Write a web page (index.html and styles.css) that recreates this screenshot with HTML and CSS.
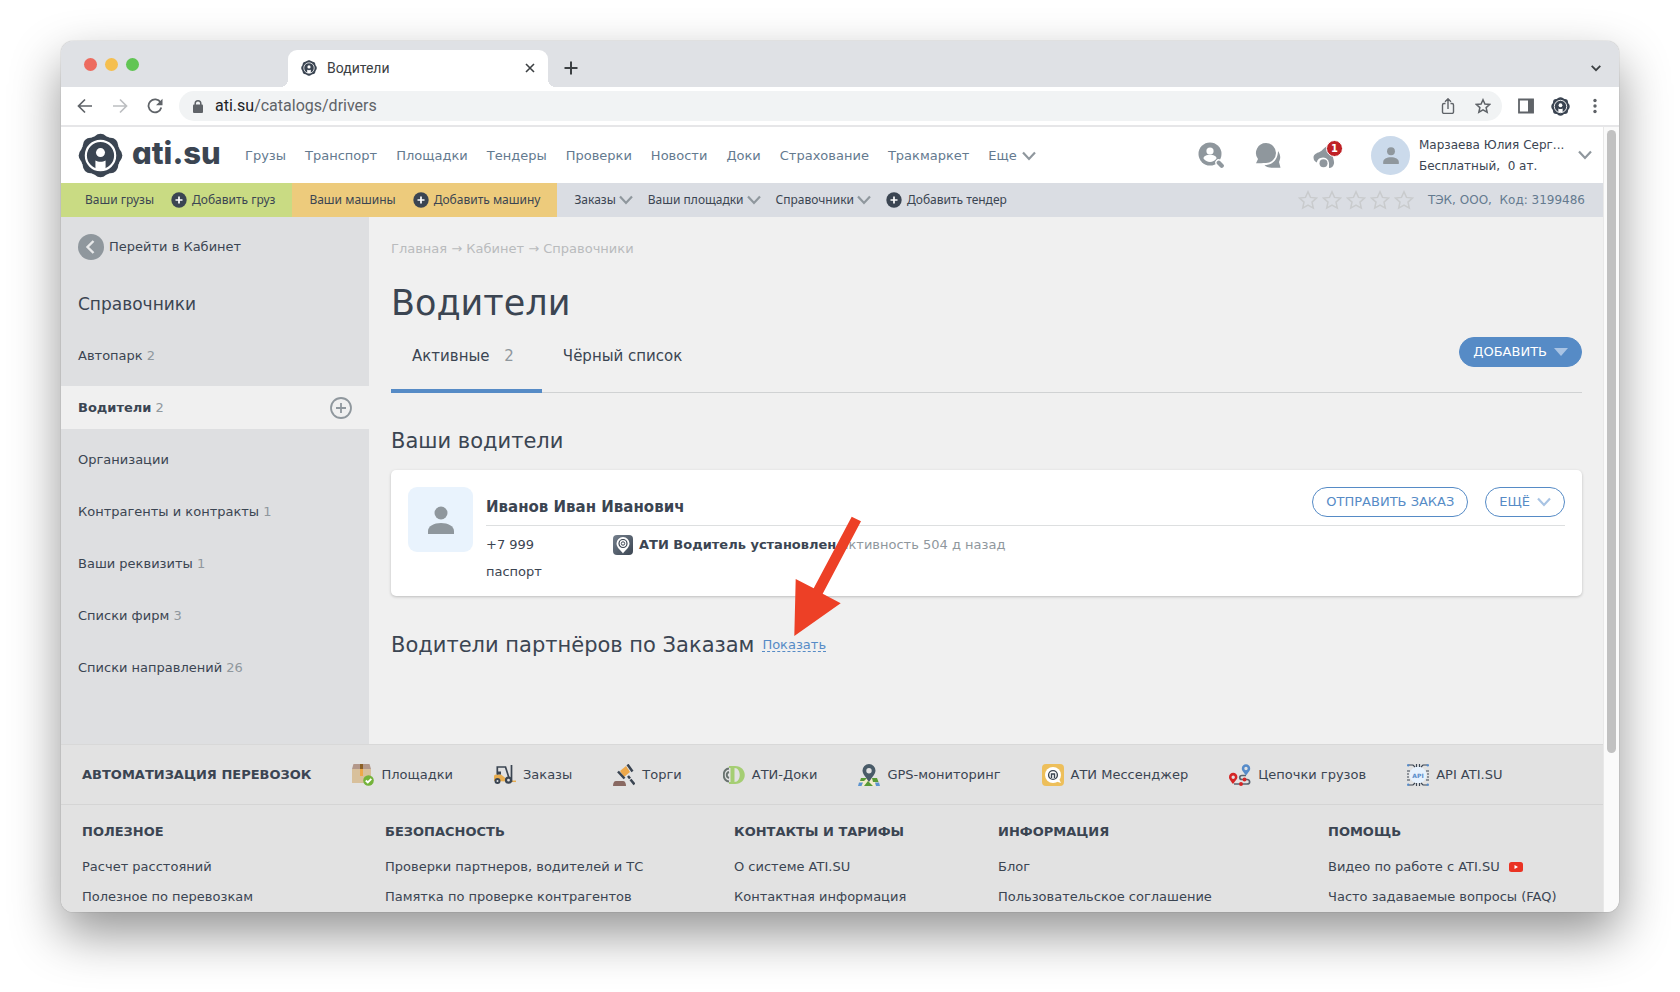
FILE: index.html
```html
<!DOCTYPE html>
<html lang="ru">
<head>
<meta charset="utf-8">
<title>Водители</title>
<link rel="stylesheet" href="styles.css">
</head>
<body>
<svg class="defs" aria-hidden="true">
  <symbol id="gear" viewBox="0 0 46 46">
    <g fill="#3b4552"><circle cx="23" cy="23" r="20.500"/><circle cx="23" cy="8.500" r="7.800"/><circle cx="33.300" cy="12.700" r="7.800"/><circle cx="37.500" cy="23" r="7.800"/><circle cx="33.300" cy="33.300" r="7.800"/><circle cx="23" cy="37.500" r="7.800"/><circle cx="12.700" cy="33.300" r="7.800"/><circle cx="8.500" cy="23" r="7.800"/><circle cx="12.700" cy="12.700" r="7.800"/></g>
    <circle cx="23" cy="23" r="15" fill="none" stroke="#fff" stroke-width="2.200"/>
    <circle cx="23" cy="20" r="4.600" fill="#fff"/>
    <path fill="#fff" d="M17.800 36.500V28c3 1.800 7.400 1.800 10.400 0v8.500c-3 1.500-7.400 1.500-10.400 0z"/>
  </symbol>
  <symbol id="chev" viewBox="0 0 14 10"><path d="M1 1.500l6 6.500 6-6.500" fill="none" stroke="currentColor" stroke-width="2.200"/></symbol>
  <symbol id="plus" viewBox="0 0 16 16"><circle cx="8" cy="8" r="7.700" fill="#3b4552"/><path d="M8 4.500v7M4.500 8h7" stroke="#fff" stroke-width="1.700"/></symbol>
  <symbol id="star" viewBox="0 0 20 20"><path d="M10 1.800l2.500 5.600 6 .6-4.500 4.100 1.300 6L10 15l-5.300 3.100 1.300-6L1.500 8l6-.6z" fill="none" stroke="currentColor" stroke-width="1.500"/></symbol>
  <symbol id="person" viewBox="0 0 26 28"><circle cx="13" cy="7" r="6.500" fill="#8f979d"/><path d="M0 28v-3c0-5 6-8 13-8s13 3 13 8v3z" fill="#8f979d"/></symbol>
</svg>

<div class="window">
  <div class="tabstrip">
    <div class="lights"><i class="light red"></i><i class="light yellow"></i><i class="light green"></i></div>
    <div class="tab">
      <svg class="i16"><use href="#gear"/></svg>
      <span class="tab-title">Водители</span>
      <button class="plain" aria-label="Закрыть вкладку"><svg class="i10" viewBox="0 0 10 10"><path d="M1 1l8 8M9 1L1 9" stroke="#3c4043" stroke-width="1.600"/></svg></button>
    </div>
    <button class="plain newtab" aria-label="Новая вкладка"><svg class="i14" viewBox="0 0 14 14"><path d="M7 .5v13M.5 7h13" stroke="#3c4043" stroke-width="2"/></svg></button>
    <button class="plain tabs-more" aria-label="Вкладки"><svg class="i10" viewBox="0 0 10 10"><path d="M.7 2.800L5 7.200l4.300-4.400" fill="none" stroke="#3c4043" stroke-width="1.800"/></svg></button>
  </div>

  <div class="toolbar">
    <div class="navbtns">
      <button class="plain" aria-label="Назад"><svg class="i16" viewBox="0 0 16 16"><path d="M15 8H2M8 1.500L1.500 8 8 14.500" fill="none" stroke="#5f6368" stroke-width="1.700"/></svg></button>
      <button class="plain" aria-label="Вперёд"><svg class="i16" viewBox="0 0 16 16"><path d="M1 8h13M8 1.500L14.500 8 8 14.500" fill="none" stroke="#bcbec1" stroke-width="1.700"/></svg></button>
      <button class="plain" aria-label="Обновить"><svg class="i16" viewBox="0 0 16 16"><path d="M13.600 4.500A6.500 6.500 0 1 0 14.300 9.500" fill="none" stroke="#5f6368" stroke-width="1.800"/><path d="M15.500.8v6.400H9z" fill="#5f6368"/></svg></button>
    </div>
    <div class="address">
      <svg class="lock" viewBox="0 0 10 13"><rect y="4.500" width="10" height="8.500" rx="1" fill="#5f6368"/><path d="M2.200 5V3.600a2.800 2.800 0 0 1 5.600 0V5" fill="none" stroke="#5f6368" stroke-width="1.500"/></svg>
      <span class="url"><b>ati.su</b>/catalogs/drivers</span>
      <svg class="i16" viewBox="0 0 16 16"><path d="M5.500 5.500H4A1.500 1.500 0 0 0 2.500 7v7A1.500 1.500 0 0 0 4 15.500h8a1.500 1.500 0 0 0 1.500-1.500V7A1.500 1.500 0 0 0 12 5.500h-1.500M8 11V1M5 3.800l3-3 3 3" fill="none" stroke="#5f6368" stroke-width="1.400"/></svg>
      <svg class="i16" viewBox="0 0 20 20"><path d="M10 2.200l2.400 5.300 5.900.6-4.400 3.900 1.300 5.800L10 14.900l-5.200 2.900L6.100 12 1.700 8.100l5.900-.6z" fill="none" stroke="#5f6368" stroke-width="1.900"/></svg>
    </div>
    <div class="tools">
      <svg class="i16" viewBox="0 0 16 16"><path d="M1 1.500h14v13H1z" fill="none" stroke="#5f6368" stroke-width="1.800"/><path d="M10 1h5.500v14H10z" fill="#5f6368"/></svg>
      <svg class="i18"><use href="#gear"/></svg>
      <svg class="i16" viewBox="0 0 16 16"><g fill="#5f6368"><circle cx="8" cy="2.500" r="1.700"/><circle cx="8" cy="8" r="1.700"/><circle cx="8" cy="13.500" r="1.700"/></g></svg>
    </div>
  </div>

  <div class="viewport">
    <div class="page">
      <header class="header">
        <a class="logo" href="#"><svg class="logo-mark"><use href="#gear"/></svg><span>ati.su</span></a>
        <nav class="nav">
          <a href="#">Грузы</a><a href="#">Транспорт</a><a href="#">Площадки</a><a href="#">Тендеры</a><a href="#">Проверки</a><a href="#">Новости</a><a href="#">Доки</a><a href="#">Страхование</a><a href="#">Тракмаркет</a><a href="#" class="more">Еще <svg class="chev"><use href="#chev"/></svg></a>
        </nav>
        <div class="head-icons">
          <svg class="i26" viewBox="0 0 26 26"><circle cx="12" cy="12" r="11.500" fill="#8f979d"/><circle cx="12" cy="9" r="3.600" fill="#fff"/><path d="M5.500 16.500c0-5 13-5 13 0-3 4.500-10 4.500-13 0z" fill="#fff"/><path d="M20.500 20.500l3.200 3.200" stroke="#fff" stroke-width="6.500" stroke-linecap="round"/><path d="M20.800 20.800l2.900 2.900" stroke="#8f979d" stroke-width="4.300" stroke-linecap="round"/></svg>
          <svg class="i26" viewBox="0 0 26 26"><path d="M11 1a10 10 0 0 1 0 20c-3.500.2-6 .2-10 .2l2-4.200A10 10 0 0 1 11 1z" fill="#8f979d"/><path d="M23 9c4 6 1.500 9 1 11l1.500 5.800H17c-4 0-6-1-7.500-2.500C18 23 23 17 23 9z" fill="#8f979d"/></svg>
          <span class="bell"><svg class="i26" viewBox="0 0 26 26"><path d="M1.500 15.500c0-3 3-4.500 6-5.500 3-1.200 4.500-4.500 7.500-6l6 8c-1 3 1.500 6 1 9.500-.5 3-3 5-5 4.200V21a6 6 0 0 0-8.500-5c-2.500 1-3.500 2.500-3.500 4.500-2-.5-3.500-2.500-3.500-5z" fill="#8f979d"/><circle cx="11.500" cy="21.200" r="4" fill="#8f979d"/></svg><span class="count">1</span></span>
        </div>
        <div class="user">
          <span class="avatar"><svg viewBox="0 0 26 28"><use href="#person"/></svg></span>
          <span class="user-text"><span>Марзаева Юлия Серг...</span><span>Бесплатный,&nbsp; 0 ат.</span></span>
          <svg class="chev grey"><use href="#chev"/></svg>
        </div>
      </header>

      <div class="subbar">
        <div class="group green-bg"><a href="#">Ваши грузы</a><a href="#"><svg class="i16"><use href="#plus"/></svg>Добавить груз</a></div>
        <div class="group orange-bg"><a href="#">Ваши машины</a><a href="#"><svg class="i16"><use href="#plus"/></svg>Добавить машину</a></div>
        <div class="group menu"><a href="#">Заказы<svg class="chev"><use href="#chev"/></svg></a><a href="#">Ваши площадки<svg class="chev"><use href="#chev"/></svg></a><a href="#">Справочники<svg class="chev"><use href="#chev"/></svg></a><a href="#" class="add"><svg class="i16"><use href="#plus"/></svg>Добавить тендер</a></div>
        <div class="firm"><span class="stars"><svg><use href="#star"/></svg><svg><use href="#star"/></svg><svg><use href="#star"/></svg><svg><use href="#star"/></svg><svg><use href="#star"/></svg></span><span>ТЭК, ООО,&nbsp; Код: 3199486</span></div>
      </div>

      <div class="body">
        <aside class="sidebar">
          <a class="back" href="#"><svg viewBox="0 0 26 26"><circle cx="13" cy="13" r="13" fill="#8f979d"/><path d="M15.500 7l-6 6 6 6" fill="none" stroke="#e8e9ea" stroke-width="2.400"/></svg>Перейти в Кабинет</a>
          <h2>Справочники</h2>
          <ul>
            <li><a href="#">Автопарк <em>2</em></a></li>
            <li class="active"><a href="#"><strong>Водители</strong> <em>2</em></a><button class="plain" aria-label="Добавить водителя"><svg class="i22" viewBox="0 0 22 22"><circle cx="11" cy="11" r="10" fill="none" stroke="#8f979d" stroke-width="1.800"/><path d="M11 6v10M6 11h10" stroke="#8f979d" stroke-width="1.800"/></svg></button></li>
            <li><a href="#">Организации</a></li>
            <li><a href="#">Контрагенты и контракты <em>1</em></a></li>
            <li><a href="#">Ваши реквизиты <em>1</em></a></li>
            <li><a href="#">Списки фирм <em>3</em></a></li>
            <li><a href="#">Списки направлений <em>26</em></a></li>
          </ul>
        </aside>

        <main class="main">
          <div class="crumbs"><a href="#">Главная</a> → <a href="#">Кабинет</a> → <a href="#">Справочники</a></div>
          <h1>Водители</h1>
          <div class="tabs">
            <a class="ptab current" href="#">Активные <em>2</em></a><a class="ptab" href="#">Чёрный список</a>
            <button class="pill solid">ДОБАВИТЬ<svg class="caret" viewBox="0 0 14 8"><path d="M0 0h14L7 8z" fill="#a9c4e4"/></svg></button>
          </div>
          <h3>Ваши водители</h3>
          <section class="card">
            <div class="photo"><svg viewBox="0 0 26 28"><use href="#person"/></svg></div>
            <div class="info">
              <div class="info-head"><strong>Иванов Иван Иванович</strong><button class="pill">ОТПРАВИТЬ ЗАКАЗ</button><button class="pill">ЕЩЁ<svg class="chev light-blue"><use href="#chev"/></svg></button></div>
              <div class="info-body">
                <div class="contacts"><span>+7 999</span><span>паспорт</span></div>
                <div class="app"><svg class="i20" viewBox="0 0 20 20"><defs><linearGradient id="ag" x1="0" y1="0" x2="1" y2="1"><stop offset="0" stop-color="#75808d"/><stop offset="1" stop-color="#3b4552"/></linearGradient></defs><rect width="20" height="20" rx="4" fill="url(#ag)"/><path d="M10 18.500c-2-3-6.500-6-6.500-10a6.500 6.500 0 0 1 13 0c0 4-4.500 7-6.500 10z" fill="#fff"/><circle cx="10" cy="8.500" r="4" fill="none" stroke="#3b4552" stroke-width="1.200"/><circle cx="10" cy="8.500" r="1.700" fill="none" stroke="#3b4552"/></svg><span><strong>АТИ Водитель установлен</strong> <span class="muted">активность 504 д назад</span></span></div>
              </div>
            </div>
          </section>
          <div class="partners">
            <h3>Водители партнёров по Заказам</h3>
            <span class="show"><a href="#">Показать</a><svg class="arrow" viewBox="0 0 68 120"><path d="M57.700.7l9.300 4.600-38.300 72.400 18 9.600L.3 120l1.400-57 18 9.300z" fill="#ed4026"/></svg></span>
          </div>
        </main>
      </div>

      <footer class="footer">
        <div class="services">
          <strong>АВТОМАТИЗАЦИЯ ПЕРЕВОЗОК</strong>
          <a href="#"><svg class="i22" viewBox="0 0 22 22"><path d="M0 5h19v14H0z" fill="#d8c09b"/><path d="M1.500 0h16L19 5H0z" fill="#b3988a"/><path d="M8 0h3v5H8z" fill="#8b6026"/><path d="M8 5h3v7H8z" fill="#eda84a"/><circle cx="16.500" cy="16.500" r="5.300" fill="#74b33b"/><path d="M13.800 16.500l2 2 3.500-3.700" fill="none" stroke="#fff" stroke-width="1.900"/></svg>Площадки</a>
          <a href="#"><svg class="i22" viewBox="0 0 22 22"><path d="M0 17v-4.500c0-2 2-2 3-2h4l5 4 1 3z" fill="#e8ad50"/><path d="M17 17.300h5" stroke="#e8ad50" stroke-width="1.500"/><path d="M3.300 10.500V3h8.200l3.500 11M17.500 1v17" fill="none" stroke="#3b4552" stroke-width="1.700"/><path d="M3 7.500h4v3H3z" fill="#3b4552"/><circle cx="3.500" cy="17" r="2" fill="#e2e2e2" stroke="#3b4552" stroke-width="2"/><circle cx="14.500" cy="16.200" r="2.500" fill="#e2e2e2" stroke="#3b4552" stroke-width="2.200"/></svg>Заказы</a>
          <a href="#"><svg class="i22" viewBox="0 0 22 22"><path d="M0 22c0-3 1-5 3-5h7c2 0 3 2 3 5z" fill="#896962"/><path d="M7 7l6-5 4 6-6 5z" fill="#eda84a"/><path d="M5 7.500l6.500 7M14.500.5l5 7" stroke="#3b4552" stroke-width="2.500"/><path d="M15 12l2 2.500M17.500 15.500l4 5" stroke="#3b4552" stroke-width="2.500"/></svg>Торги</a>
          <a href="#"><svg class="i22" viewBox="0 0 22 22"><path d="M6 4.500c-7 1-7 12 0 13M6 8c-3 1-3 5 0 6" fill="none" stroke="#69736f" stroke-width="1.900"/><path fill-rule="evenodd" fill="#a5ce73" d="M6 2h6c13 0 13 18 0 18H6v-2h1.500V4H6zM11.500 4v14c7 0 7-14 0-14z"/></svg>АТИ-Доки</a>
          <a href="#"><svg class="i22" viewBox="0 0 22 22"><path d="M3 14h16l3 8H0z" fill="#f3edcd"/><path d="M3 14h6l-3 3H2zM14 14h5l1.500 4H15zM10 17l5 5H6z" fill="#589a37"/><path d="M1 18.500h4L3.500 22H0zM17 18.500h4L22 22h-4z" fill="#5b93d1"/><path fill-rule="evenodd" fill="#495b68" d="M11 18C7 12 4.500 9.500 4.500 6.500a6.500 6.500 0 0 1 13 0c0 3-2.500 5.500-6.500 11.500zM11 4a2.700 2.700 0 1 0 0 5.400A2.700 2.700 0 0 0 11 4z"/></svg>GPS-мониторинг</a>
          <a href="#"><svg class="i22" viewBox="0 0 22 22"><rect width="22" height="22" rx="4" fill="#edbf5b"/><circle cx="11" cy="11" r="8" fill="#fff"/><path d="M13 17l6 2-3-6z" fill="#fff"/><circle cx="11" cy="11" r="4.400" fill="none" stroke="#3b4552" stroke-width="1.400"/><path d="M9.500 14v-4h3v4" fill="none" stroke="#3b4552" stroke-width="1.400"/></svg>АТИ Мессенджер</a>
          <a href="#"><svg class="i22" viewBox="0 0 22 22"><path d="M5 20h13c4 0 3-4.500 0-4.500h-5c-3 0-3-4 0-4h4" fill="none" stroke="#596370" stroke-width="1.700"/><path fill-rule="evenodd" fill="#d52626" d="M4 20C1 16 0 15 0 13a4.200 4.200 0 0 1 8.400 0c0 2-1.400 3-4.400 7zm.2-8.500a1.700 1.700 0 1 0 0 3.400 1.700 1.700 0 0 0 0-3.400z"/><path fill-rule="evenodd" fill="#568bc9" d="M17 11.500c-3-4-4.200-5-4.200-7a4.200 4.200 0 0 1 8.400 0c0 2-1.200 3-4.200 7zm0-8.700a1.700 1.700 0 1 0 0 3.400 1.700 1.700 0 0 0 0-3.400z"/><circle cx="15.500" cy="15.500" r="2" fill="#d52626"/><circle cx="12" cy="20" r="2" fill="#d52626"/></svg>Цепочки грузов</a>
          <a href="#"><svg class="i22" viewBox="0 0 22 22"><circle cx="11" cy="11" r="8.500" fill="#e6f1fd"/><path d="M2 1h4l2 2M20 1h-4l-2 2M2 21h4l2-2M20 21h-4l-2-2M9.500 0v3M12.500 0v3M9.500 19v3M12.500 19v3M0 7h3M0 10h2M0 13h2M0 16h3M22 7h-3M22 10h-2M22 13h-2M22 16h-3" fill="none" stroke="#3b4552" stroke-width="1.200"/><g fill="#568bc9"><circle cx="1.200" cy="1.200" r="1.200"/><circle cx="20.800" cy="1.200" r="1.200"/><circle cx="1.200" cy="20.800" r="1.200"/><circle cx="20.800" cy="20.800" r="1.200"/></g><text x="11" y="13.500" text-anchor="middle" class="api">API</text></svg>API ATI.SU</a>
        </div>
        <div class="columns">
          <div><h4>ПОЛЕЗНОЕ</h4><a href="#">Расчет расстояний</a><a href="#">Полезное по перевозкам</a></div>
          <div><h4>БЕЗОПАСНОСТЬ</h4><a href="#">Проверки партнеров, водителей и ТС</a><a href="#">Памятка по проверке контрагентов</a></div>
          <div><h4>КОНТАКТЫ И ТАРИФЫ</h4><a href="#">О системе ATI.SU</a><a href="#">Контактная информация</a></div>
          <div><h4>ИНФОРМАЦИЯ</h4><a href="#">Блог</a><a href="#">Пользовательское соглашение</a></div>
          <div><h4>ПОМОЩЬ</h4><a href="#">Видео по работе с ATI.SU<svg class="yt" viewBox="0 0 14 10"><rect width="14" height="10" rx="2.500" fill="#ea3323"/><path d="M5.500 3v4L9 5z" fill="#fff"/></svg></a><a href="#">Часто задаваемые вопросы (FAQ)</a></div>
        </div>
      </footer>
    </div>
    <div class="scrollbar"><div class="thumb"></div></div>
  </div>
</div>
</body>
</html>
```

FILE: styles.css
```css
* { box-sizing: border-box; }
body {
  margin: 0;
  height: 100vh;
  padding: 41px 61px 80px;
  display: flex;
  background: #fff;
  color: #3b4552;
  font-family: "DejaVu Sans", Verdana, sans-serif;
  font-size: 13px;
  line-height: 20px;
  white-space: nowrap;
}
a { color: inherit; text-decoration: none; }
svg { flex: none; display: block; }
h1, h2, h3, h4, ul { margin: 0; padding: 0; font-weight: 400; list-style: none; }
em { font-style: normal; color: #8f979d; }
.defs { position: absolute; width: 0; height: 0; }
.plain { border: 0; padding: 0; background: none; display: flex; }
.i10 { width: 10px; height: 10px; }
.i14 { width: 14px; height: 14px; }
.i16 { width: 16px; height: 16px; }
.i18 { width: 19px; height: 19px; }
.i20 { width: 20px; height: 20px; }
.i22 { width: 22px; height: 22px; }
.i26 { width: 26px; height: 26px; }
.chev { width: 14px; height: 10px; color: #8f979d; }
.light-blue { color: #a9c4e4; }

.window {
  flex: 1;
  min-width: 0;
  display: flex;
  flex-direction: column;
  overflow: hidden;
  border-radius: 12px;
  background: #fff;
  box-shadow: 0 0 1px rgba(0,0,0,.5), 0 22px 50px rgba(0,0,0,.42);
}

.tabstrip { display: flex; align-items: center; height: 46px; flex: none; padding: 0 18px 0 23px; background: #dfe1e5; }
.lights { display: flex; gap: 8px; width: 204px; }
.light { width: 13px; height: 13px; border-radius: 50%; }
.red { background: #ed6b5f; }
.yellow { background: #f5bf4f; }
.green { background: #61c554; }
.tab {
  position: relative;
  align-self: flex-end;
  display: flex;
  align-items: center;
  gap: 10px;
  width: 260px;
  height: 37px;
  padding: 0 13px 2px;
  border-radius: 9px 9px 0 0;
  background: #fff;
}
.tab::before, .tab::after { content: ""; position: absolute; bottom: 0; width: 8px; height: 8px; }
.tab::before { right: 100%; background: radial-gradient(circle at 0 0, transparent 8px, #fff 8px); }
.tab::after { left: 100%; background: radial-gradient(circle at 100% 0, transparent 8px, #fff 8px); }
.tab-title { flex: 1; font: 14px/20px Roboto, sans-serif; color: #3c4043; }
.newtab { margin-left: 16px; padding-top: 8px; }
.tabs-more { margin-left: auto; padding-top: 8px; }

.toolbar { display: flex; align-items: center; flex: none; height: 40px; border-bottom: 2px solid #e6e6e8; }
.navbtns { display: flex; gap: 19px; padding: 0 16px; }
.address { flex: 1; display: flex; align-items: center; gap: 19px; height: 30px; padding: 0 11px 0 14px; border-radius: 15px; background: #f1f3f4; }
.lock { width: 10px; height: 13px; }
.url { flex: 1; margin-left: -7px; font: 16px/20px Roboto, sans-serif; color: #5f6368; }
.url b { font-weight: 400; color: #202124; }
.tools { display: flex; align-items: center; gap: 17px; padding: 0 16px; }

.viewport { flex: 1; min-height: 0; display: flex; }
.page { flex: 1; min-width: 0; overflow: hidden; }
.scrollbar { width: 16px; flex: none; padding: 3px 3px; background: #fafafa; border-left: 1px solid #e8e8e8; }
.thumb { width: 9px; height: 80%; border-radius: 5px; background: #c1c1c1; }

.header { display: flex; align-items: center; height: 56px; padding: 0 11px 0 17px; }
.logo { display: flex; align-items: center; gap: 9px; width: 167px; }
.logo-mark { width: 45px; height: 45px; }
.logo span { padding-bottom: 4px; font: 800 31px/40px Inter, sans-serif; font-feature-settings: "cv11"; }
.nav { display: flex; flex: 1; gap: 19px; padding-top: 2px; color: #647a8f; }
.more { display: flex; align-items: center; gap: 5px; }
.head-icons { display: flex; gap: 31px; }
.bell { position: relative; }
.count { position: absolute; left: 14px; top: -2px; width: 17px; height: 17px; border: 1px solid #fff; border-radius: 50%; background: #bf2025; color: #fff; font-size: 10px; line-height: 15px; font-weight: 700; text-align: center; }
.user { display: flex; align-items: center; padding-left: 33px; }
.avatar { display: grid; place-items: center; width: 39px; height: 39px; border-radius: 50%; background: #cbdaeb; }
.avatar svg { width: 16px; height: 17px; }
.user-text { display: grid; width: 168px; padding: 2px 0 0 9px; font-size: 12px; line-height: 21px; }

.subbar { display: flex; height: 34px; background: #dadde3; font-size: 12px; }
.group { display: flex; align-items: center; padding: 0 17px; gap: 17px; font-family: "Noto Sans", Tahoma, sans-serif; }
.group a { display: flex; align-items: center; gap: 5px; }
.green-bg { background: #c9db83; padding-left: 24px; }
.orange-bg { background: #edcb7c; }
.menu { gap: 15px; }
.menu a { gap: 3px; }
.menu .add { gap: 5px; }
.firm { display: flex; align-items: center; gap: 14px; margin-left: auto; padding-right: 18px; color: #647a8f; }
.stars { display: flex; gap: 4px; color: #c9cbcd; }
.stars svg { width: 20px; height: 20px; }

.body { display: flex; min-height: 527px; }
.sidebar { width: 308px; flex: none; padding-top: 17px; background: #dedfe1; }
.back { display: flex; align-items: center; gap: 5px; padding-left: 17px; }
.back svg { width: 26px; height: 26px; }
.sidebar h2 { padding: 31px 17px 0; font-size: 17px; line-height: 26px; }
.sidebar ul { display: grid; gap: 9px; padding-top: 17px; }
.sidebar li { display: flex; align-items: center; justify-content: space-between; height: 43px; padding: 0 17px; }
.active { background: #f0f0f0; }

.main { flex: 1; min-width: 0; padding: 22px 21px 0 22px; background: #f0f0f0; }
.crumbs { color: #b9bbbd; }
h1 { padding-top: 22px; font-size: 35px; line-height: 44px; }
.tabs { display: flex; height: 68px; border-bottom: 1px solid #d0d2d3; font-size: 15px; }
.ptab { height: 68px; padding: 21px 21px 0; }
.ptab em { padding: 0 7px 0 10px; }
.current { border-bottom: 4px solid #568bc6; }
.pill { display: flex; align-items: center; gap: 7px; height: 30px; padding: 0 13px; border: 1px solid #568bc6; border-radius: 15px; background: #fff; color: #568bc6; font: 13px/20px "DejaVu Sans", Verdana, sans-serif; }
.solid { background: #568bc6; color: #fff; margin: 12px 0 0 auto; }
.caret { width: 14px; height: 8px; }
h3 { font-size: 21px; line-height: 30px; }
.main > h3 { padding-top: 33px; }
.card { display: flex; gap: 13px; margin-top: 14px; padding: 17px 17px 11px; border-radius: 5px; background: #fff; box-shadow: 0 1px 3px rgba(0,0,0,.22); }
.photo { display: grid; place-items: center; width: 65px; height: 65px; border-radius: 9px; background: #e9f3fd; }
.photo svg { width: 26px; height: 28px; }
.info { flex: 1; }
.info-head { display: flex; gap: 17px; height: 39px; border-bottom: 1px solid #dddfe0; }
.info-head strong { flex: 1; padding-top: 10px; font-size: 15px; }
.info-body { display: flex; padding-top: 5px; }
.contacts { display: grid; width: 127px; line-height: 27px; }
.app { display: flex; align-items: center; gap: 6px; height: 27px; }
.muted { color: #8f979d; }
.partners { display: flex; align-items: center; gap: 8px; padding-top: 34px; }
.show { position: relative; color: #568bc6; }
.show a { text-decoration: underline dashed 1px; text-underline-offset: 2px; }
.arrow { position: absolute; left: 32px; bottom: 19px; width: 68px; height: 120px; }

.footer { background: #e2e2e2; border-top: 1px solid #d8d8d8; }
.services { display: flex; align-items: center; gap: 41px; height: 60px; padding: 0 21px; border-bottom: 1px solid #d5d5d5; }
.services a { display: flex; align-items: center; gap: 7px; }
.api { font: 700 6px "DejaVu Sans", sans-serif; fill: #568bc9; }
.columns { display: grid; grid-template-columns: 303fr 349fr 264fr 330fr 275fr; padding: 14px 0 0 21px; }
.columns a { display: flex; align-items: center; gap: 9px; line-height: 30px; }
h4 { font-weight: 700; line-height: 26px; padding-bottom: 7px; }
.yt { width: 14px; height: 10px; }
```
